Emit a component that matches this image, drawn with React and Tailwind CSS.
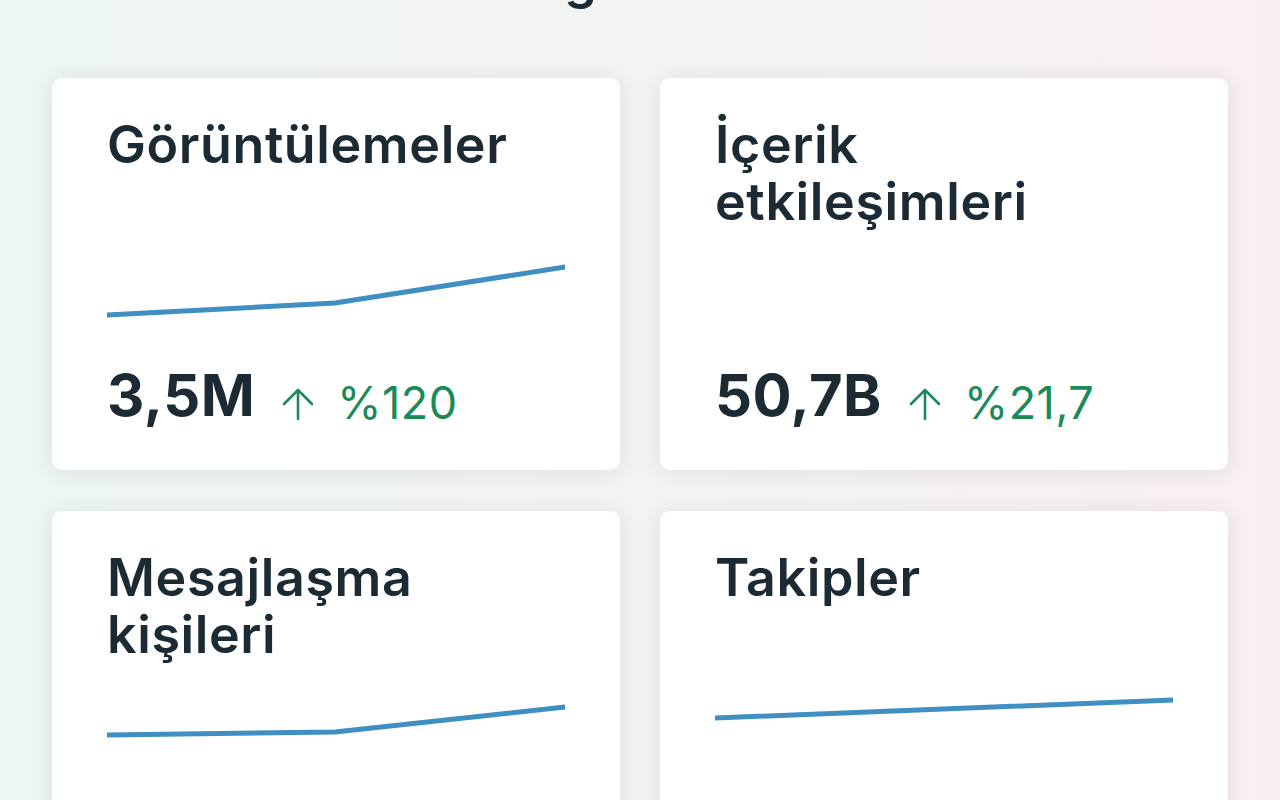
const stats = [
  {
    title: ["Görüntülemeler"],
    value: "3,5M",
    change: "%120",
    points: "0,85 228,73 458,37",
  },
  {
    title: ["İçerik", "etkileşimleri"],
    value: "50,7B",
    change: "%21,7",
    points: null,
  },
  {
    title: ["Mesajlaşma", "kişileri"],
    value: "1,2B",
    change: "%35",
    points: "0,72 228,69 458,44",
  },
  {
    title: ["Takipler"],
    value: "8,4B",
    change: "%12",
    points: "0,55 228,46 458,37",
  },
];

function UpArrow() {
  return (
    <svg width="34" height="34" viewBox="0 0 34 34" fill="none" className="shrink-0 mb-[5px]">
      <path
        d="M17 32V3M3 17L17 3L31 17"
        stroke="#1b8a5a"
        strokeWidth="2.6"
        strokeLinecap="round"
        strokeLinejoin="round"
      />
    </svg>
  );
}

function StatCard({ title, value, change, points }) {
  return (
    <div className="bg-white rounded-[10px] shadow-[0_2px_22px_rgba(0,0,0,0.09)] h-[392px] px-[55px] pt-[38px] pb-[46px] flex flex-col">
      {/* Title */}
      <div className="h-[114px] text-[52px] leading-[57px] font-semibold text-[#1c2b33] tracking-[0.6px]">
        {title.map((line) => (
          <div key={line}>{line}</div>
        ))}
      </div>

      {/* Chart */}
      <div className="h-[100px]">
        {points && (
          <svg width="458" height="100" viewBox="0 0 458 100" fill="none">
            <polyline
              points={points}
              stroke="#3f8fc3"
              strokeWidth="5"
              strokeLinecap="round"
              strokeLinejoin="round"
              fill="none"
            />
          </svg>
        )}
      </div>

      {/* Value */}
      <div className="mt-auto flex items-end h-[58px]">
        <span className="text-[58px] leading-[58px] font-bold text-[#1c2b33] tracking-[0.5px]">
          {value}
        </span>
        <div className="flex items-end ml-[26px] translate-y-[2px]">
          <UpArrow />
          <span className="ml-[22px] text-[45px] leading-[46px] text-[#1b8a5a] tracking-[0.5px]">
            {change}
          </span>
        </div>
      </div>
    </div>
  );
}

export default function App() {
  return (
    <div
      className="min-h-screen overflow-hidden bg-gradient-to-r from-[#edf6f2] via-[#f3f4f2] to-[#f8eff4]"
      style={{ fontFamily: "Inter, 'Noto Sans', sans-serif" }}
    >
      <h1 className="-mt-[49px] text-center text-[52px] leading-[57px] font-semibold text-[#1c2b33] pr-[96px]">
        Hesabın genel özeti
      </h1>

      <div className="grid grid-cols-2 gap-x-[40px] gap-y-[41px] px-[52px] mt-[70px] pb-[40px]">
        {stats.map((s) => (
          <StatCard key={s.title[0]} {...s} />
        ))}
      </div>
    </div>
  );
}
